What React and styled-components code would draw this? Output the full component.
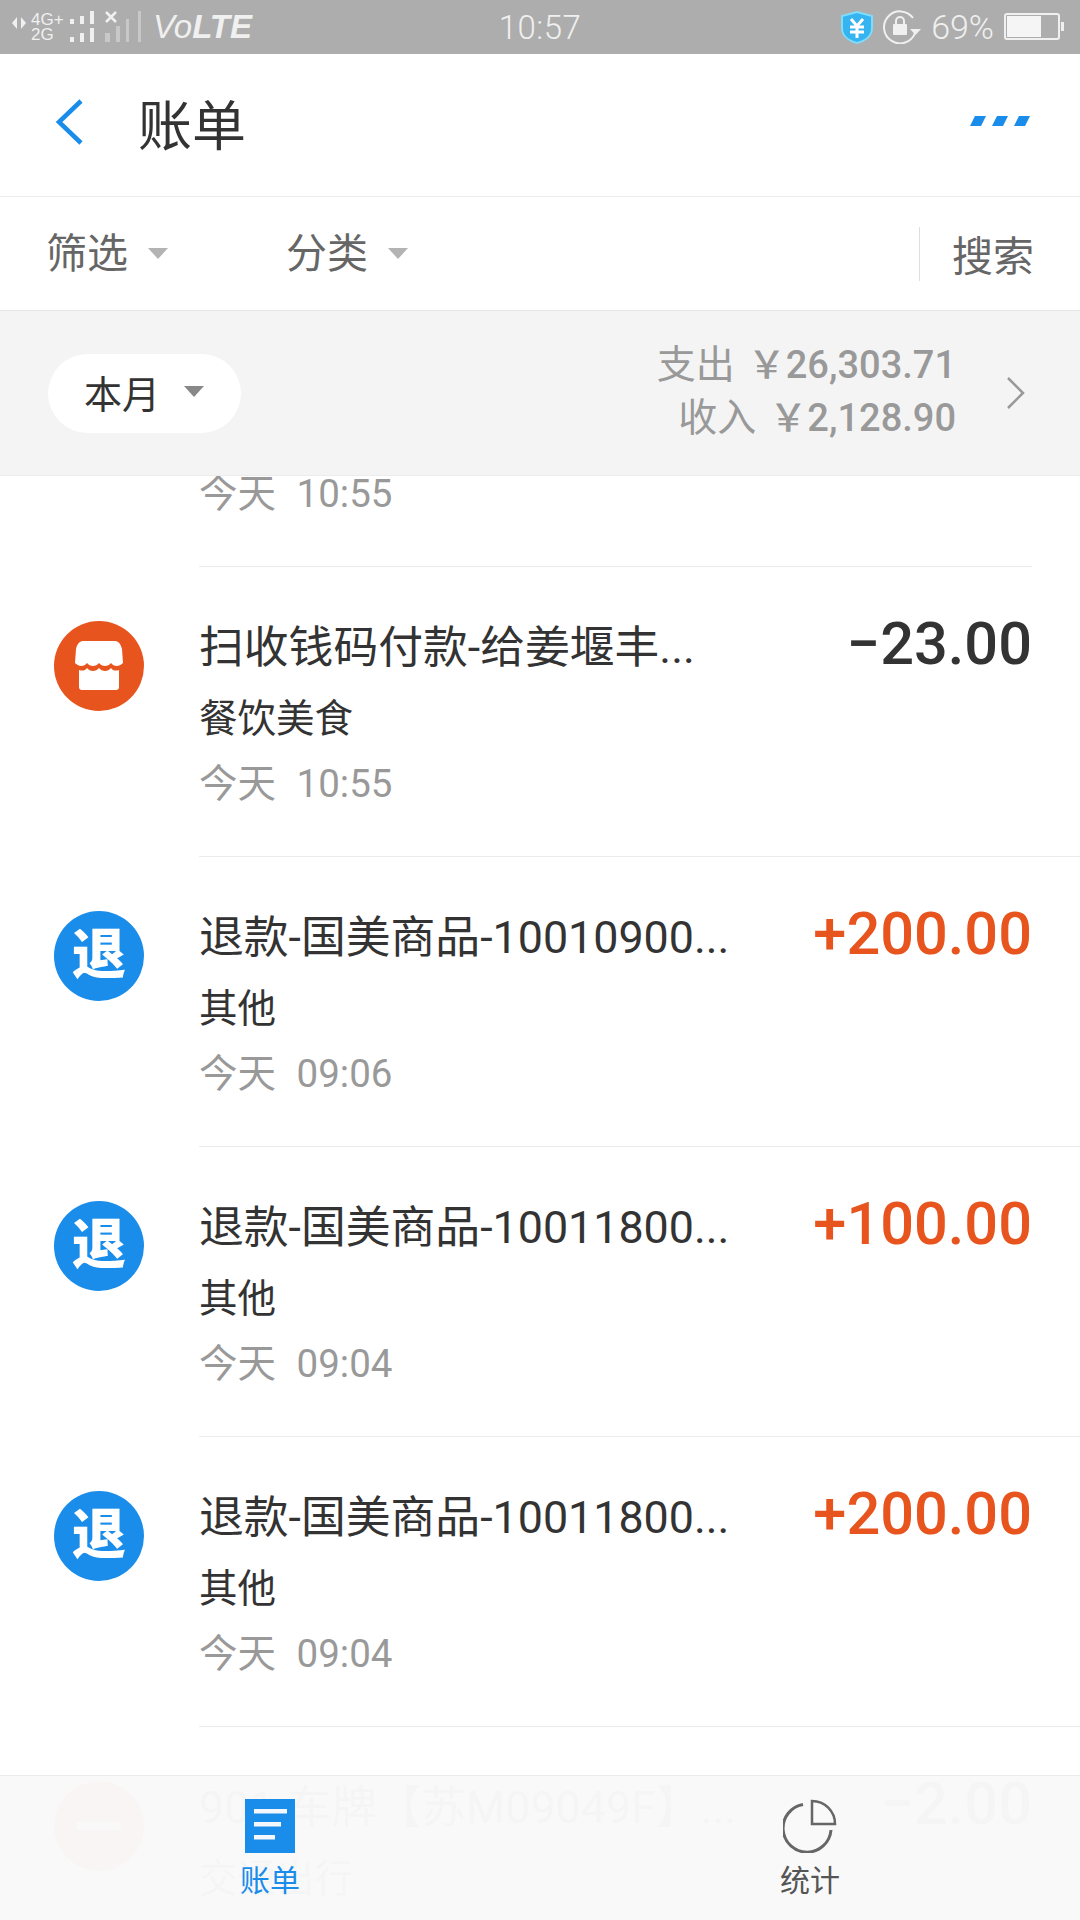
import React from "react";
import styled, { createGlobalStyle } from "styled-components";

const Global = createGlobalStyle`
  html, body { margin: 0; padding: 0; background: #fff; }
  * { box-sizing: border-box; }
`;

const Page = styled.div`
  position: relative;
  width: 1080px;
  height: 1920px;
  overflow: hidden;
  display: flex;
  flex-direction: column;
  background: #fff;
  font-family: Roboto, "Noto Sans CJK SC", sans-serif;
  color: #333;
`;

const StatusBar = styled.div`
  height: 54px;
  flex: none;
  background: #adadad;
  color: #f0f0f0;
  display: flex;
  align-items: center;
  justify-content: space-between;
  padding: 0 16px 0 12px;
`;
const StatusSide = styled.div`
  width: 400px;
  display: flex;
  align-items: center;
  gap: ${(p) => p.$gap || 0}px;
  justify-content: ${(p) => (p.$end ? "flex-end" : "flex-start")};
`;
const Clock = styled.div`
  font-size: 33px;
  font-weight: 300;
  letter-spacing: 0.5px;
  margin-left: 4px;
`;
const Percent = styled.span`
  font-size: 34px;
  font-weight: 300;
`;
const Volte = styled.span`
  font-family: "Liberation Sans", sans-serif;
  font-size: 33px;
  font-style: italic;
  margin-left: 4px;
  b { font-weight: 700; }
`;
const NetLabels = styled.div`
  font-family: "Liberation Sans", sans-serif;
  font-size: 17px;
  line-height: 15px;
  width: 34px;
  margin: 0 4px 0 5px;
`;
const SignalGap = styled.div`
  width: 6px;
  flex: none;
`;

const NavBar = styled.div`
  height: 143px;
  flex: none;
  display: flex;
  align-items: center;
  padding: 0 48px 6px 54px;
  border-bottom: 1px solid #ececec;
`;
const Title = styled.div`
  font-size: 54px;
  font-weight: 400;
  margin-left: 54px;
  flex: 1;
  color: #333;
`;

const FilterBar = styled.div`
  height: 114px;
  flex: none;
  display: flex;
  align-items: center;
  padding: 0 46px;
  border-bottom: 1px solid #e8e8e8;
`;
const FilterItem = styled.div`
  width: 240px;
  display: flex;
  align-items: center;
  gap: 20px;
  font-size: 41px;
  line-height: 56px;
  color: #666;
`;
const Caret = styled.span`
  width: 0;
  height: 0;
  border-left: 10.5px solid transparent;
  border-right: 10.5px solid transparent;
  border-top: 11px solid ${(p) => p.$color || "#b3b3b3"};
`;
const SearchBox = styled.div`
  margin-left: auto;
  display: flex;
  align-items: center;
  height: 54px;
  border-left: 1px solid #dedede;
  padding-left: 32px;
  padding-bottom: 2px;
  font-size: 41px;
  color: #666;
`;
const Spacer = styled.div`flex: 1;`;

const Summary = styled.div`
  height: 165px;
  flex: none;
  background: #f4f4f4;
  border-bottom: 1px solid #ececec;
  display: flex;
  align-items: center;
  padding: 0 54px 0 48px;
`;
const MonthPill = styled.div`
  width: 193px;
  height: 79px;
  border-radius: 40px;
  background: #fff;
  display: flex;
  align-items: center;
  gap: 24px;
  padding: 0 0 3px 36px;
  font-size: 38px;
  color: #333;
`;
const Totals = styled.div`
  margin-left: auto;
  margin-bottom: 2px;
  text-align: right;
  font-size: 39px;
  line-height: 53px;
  color: #999;
  margin-right: 50px;
`;
const TotalValue = styled.span`
  margin-left: 13px;
  font-size: 38px;
  font-weight: 500;
`;

const List = styled.div`
  flex: 1;
  min-height: 0;
  overflow: hidden;
`;
const PartialRow = styled.div`
  height: 91px;
  margin-left: 199px;
  margin-right: 48px;
  border-bottom: 1px solid #ececec;
  font-size: 38.5px;
  color: #999;
  line-height: 36px;
  word-spacing: 11px;
`;
const Row = styled.div`
  height: 290px;
  display: flex;
  padding-left: 54px;
`;
const Badge = styled.div`
  width: 90px;
  height: 90px;
  flex: none;
  margin-top: 54px;
  border-radius: 50%;
  background: ${(p) => p.$color};
  color: #fff;
  display: flex;
  align-items: center;
  justify-content: center;
  font-size: 54px;
  font-weight: 900;
  line-height: 1;
`;
const RowBody = styled.div`
  flex: 1;
  margin-left: 55px;
  padding-right: 48px;
  border-bottom: 1px solid #ececec;
  display: flex;
  justify-content: space-between;
  align-items: flex-start;
`;
const Texts = styled.div`
  padding-top: 46px;
`;
const RowTitle = styled.div`
  color: #333;
  font-size: 44.8px;
  white-space: nowrap;
  line-height: 70px;
`;
const Category = styled.div`
  color: #333;
  font-size: 38.5px;
  line-height: 72px;
`;
const Time = styled.div`
  color: #999;
  font-size: 38.5px;
  word-spacing: 11px;
  line-height: 58px;
`;
const Amount = styled.div`
  padding-top: 45px;
  font-size: 59.5px;
  font-weight: 500;
  line-height: 64px;
  color: ${(p) => (p.$income ? "#e8541e" : "#333")};
  white-space: nowrap;
`;

const BottomBar = styled.div`
  position: absolute;
  left: 0;
  right: 0;
  bottom: 0;
  height: 145px;
  background: rgba(249, 249, 249, 0.98);
  border-top: 1px solid #ececec;
  display: flex;
`;
const Tab = styled.div`
  width: 540px;
  display: flex;
  flex-direction: column;
  align-items: center;
  padding-top: 23px;
  font-size: 30px;
  line-height: 40px;
  color: ${(p) => (p.$active ? "#1a8cea" : "#555")};
`;
const TabLabel = styled.div`margin-top: 8px;`;

const BackIcon = () => (
  <svg width="30" height="48" viewBox="0 0 30 48">
    <path d="M27 3 L5 24 L27 45" fill="none" stroke="#1a8cea" strokeWidth="4.5" />
  </svg>
);
const MoreIcon = () => (
  <svg width="62" height="12" viewBox="0 0 62 12">
    <g fill="#1a8cea">
      <path d="M5 0h11l-5 10H0z" />
      <path d="M27 0h11l-5 10H22z" />
      <path d="M49 0h11l-5 10H44z" />
    </g>
  </svg>
);
const Chevron = () => (
  <svg width="20" height="34" viewBox="0 0 20 34">
    <path d="M2 2 L17 17 L2 32" fill="none" stroke="#999" strokeWidth="2.5" />
  </svg>
);
const DataArrows = () => (
  <svg width="14" height="30" viewBox="0 0 14 30">
    <path d="M0 11 L5 5 V17 Z M14 11 L9 5 V17 Z" fill="#f0f0f0" />
  </svg>
);
const DualSignal = () => (
  <svg width="30" height="32" viewBox="0 0 30 32">
    <g fill="#f0f0f0">
      <rect x="1" y="8" width="4" height="5" />
      <rect x="11" y="5" width="4" height="8" />
      <rect x="21" y="0" width="4" height="13" />
      <rect x="1" y="26" width="4" height="5" />
      <rect x="11" y="22" width="4" height="9" />
      <rect x="21" y="17" width="4" height="14" />
    </g>
  </svg>
);
const NoSignal = () => (
  <svg width="44" height="32" viewBox="0 0 44 32">
    <path d="M1 1 L11 11 M11 1 L1 11" stroke="#f0f0f0" strokeWidth="2.5" fill="none" />
    <g fill="#c8c8c8">
      <rect x="0" y="22" width="5" height="9" />
      <rect x="11" y="15" width="4" height="16" />
      <rect x="21" y="8" width="3" height="23" />
      <rect x="33" y="0" width="3" height="31" />
    </g>
  </svg>
);
const ShieldIcon = () => (
  <svg width="32" height="33" viewBox="0 0 32 33">
    <path d="M16 1 L31 5 V17 C31 25 24 30 16 32 C8 30 1 25 1 17 V5 Z" fill="#35b4f0" stroke="#7fdcfb" strokeWidth="2" />
    <path d="M10 8 L16 15 L22 8 M9 16 H23 M9 21 H23 M16 15 V27" fill="none" stroke="#fff" strokeWidth="3" />
  </svg>
);
const RotationIcon = () => (
  <svg width="38" height="34" viewBox="0 0 38 34">
    <path d="M32 23 A16 16 0 1 1 30 8" fill="none" stroke="#f0f0f0" strokeWidth="2" />
    <path d="M27 19 H38 L32.5 25 Z" fill="#f0f0f0" />
    <rect x="10" y="14" width="14" height="11" rx="1" fill="#f0f0f0" />
    <path d="M13 14 V11 A4 4 0 0 1 21 11 V14" fill="none" stroke="#f0f0f0" strokeWidth="2" />
  </svg>
);
const BatteryIcon = () => (
  <svg width="60" height="28" viewBox="0 0 60 28">
    <rect x="1" y="1" width="54" height="25" rx="2" fill="none" stroke="#f0f0f0" strokeWidth="2" />
    <rect x="3" y="3" width="34" height="21" fill="#f5f5f5" />
    <rect x="57" y="9" width="3" height="9" fill="#f0f0f0" />
  </svg>
);
const ShopIcon = () => (
  <svg width="48" height="50" viewBox="0 0 48 50">
    <path d="M8 0 H40 C44 0 46 4 47 8 L48 22 C44 26 39 26 36 22 C33 26 27 26 24 22 C21 26 15 26 12 22 C9 26 4 26 0 22 L1 8 C2 4 4 0 8 0 Z" fill="#fff" />
    <path d="M4 29 C7 30 10 30 12 27 C15 31 21 31 24 27 C27 31 33 31 36 27 C38 30 41 30 44 29 V46 C44 48 43 49 41 49 H7 C5 49 4 48 4 46 Z" fill="#fff" />
  </svg>
);
const TransitIcon = () => (
  <svg width="50" height="50" viewBox="0 0 50 50">
    <rect x="3" y="21" width="44" height="8" rx="2" fill="#fff" />
  </svg>
);
const BillIcon = () => (
  <svg width="50" height="54" viewBox="0 0 50 54">
    <rect width="50" height="54" fill="#1a8cea" />
    <g fill="#f4f8fc">
      <rect x="9" y="10" width="33" height="4.5" />
      <rect x="9" y="23" width="27" height="4.5" />
      <rect x="9" y="36" width="21" height="4.5" />
    </g>
  </svg>
);
const PieIcon = () => (
  <svg width="54" height="54" viewBox="0 0 54 54">
    <g fill="none" stroke="#666" strokeWidth="3">
      <path d="M20 5.5 A24 24 0 1 0 48 31" />
      <path d="M29 2 V25 H52 A23 23 0 0 0 29 2 Z" strokeWidth="2.5" />
    </g>
  </svg>
);

const badgeContent = { shop: <ShopIcon />, transit: <TransitIcon />, refund: "退" };

const rows = [
  { kind: "shop", title: "扫收钱码付款-给姜堰丰...", category: "餐饮美食", time: "今天 10:55", amount: "−23.00" },
  { kind: "refund", title: "退款-国美商品-10010900...", category: "其他", time: "今天 09:06", amount: "+200.00", income: true },
  { kind: "refund", title: "退款-国美商品-10011800...", category: "其他", time: "今天 09:04", amount: "+100.00", income: true },
  { kind: "refund", title: "退款-国美商品-10011800...", category: "其他", time: "今天 09:04", amount: "+200.00", income: true },
  { kind: "transit", title: "901-车牌【苏M09049F】...", category: "交通出行", time: "今天 08:50", amount: "−2.00" },
];

export default function App() {
  return (
    <Page>
      <Global />
      <StatusBar>
        <StatusSide>
          <DataArrows />
          <NetLabels>4G+<br />2G</NetLabels>
          <DualSignal />
          <SignalGap />
          <NoSignal />
          <Volte>Vo<b>LTE</b></Volte>
        </StatusSide>
        <Clock>10:57</Clock>
        <StatusSide $end $gap={10}>
          <ShieldIcon />
          <RotationIcon />
          <Percent>69%</Percent>
          <BatteryIcon />
        </StatusSide>
      </StatusBar>
      <NavBar>
        <BackIcon />
        <Title>账单</Title>
        <MoreIcon />
      </NavBar>
      <FilterBar>
        <FilterItem>筛选<Caret /></FilterItem>
        <FilterItem>分类<Caret /></FilterItem>
        <Spacer />
        <SearchBox>搜索</SearchBox>
      </FilterBar>
      <Summary>
        <MonthPill>本月<Caret $color="#888" /></MonthPill>
        <Totals>
          <div>支出<TotalValue>￥26,303.71</TotalValue></div>
          <div>收入<TotalValue>￥2,128.90</TotalValue></div>
        </Totals>
        <Chevron />
      </Summary>
      <List>
        <PartialRow>今天 10:55</PartialRow>
        {rows.map((r, i) => (
          <Row key={i}>
            <Badge $color={r.kind === "refund" ? "#1a8cea" : "#e8541e"}>
              {badgeContent[r.kind]}
            </Badge>
            <RowBody>
              <Texts>
                <RowTitle>{r.title}</RowTitle>
                <Category>{r.category}</Category>
                <Time>{r.time}</Time>
              </Texts>
              <Amount $income={r.income}>{r.amount}</Amount>
            </RowBody>
          </Row>
        ))}
      </List>
      <BottomBar>
        <Tab $active>
          <BillIcon />
          <TabLabel>账单</TabLabel>
        </Tab>
        <Tab>
          <PieIcon />
          <TabLabel>统计</TabLabel>
        </Tab>
      </BottomBar>
    </Page>
  );
}
